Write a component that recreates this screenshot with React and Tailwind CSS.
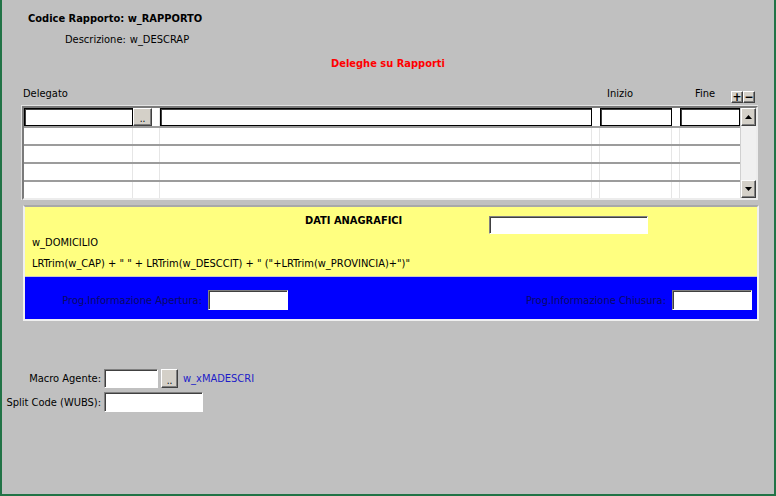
import React from "react";

const sunken =
  "bg-white border border-t-[#808080] border-l-[#808080] border-r-white border-b-white shadow-[inset_1px_1px_0_#404040]";
const raised =
  "bg-[#d4d0c8] border border-t-white border-l-white border-r-[#404040] border-b-[#404040] shadow-[inset_-1px_-1px_0_#808080]";
const gridInput = "bg-white border border-black shadow-[inset_1px_1px_0_#404040]";

const cellW = ["w-[109px]", "w-[27px]", "w-[432px]", "w-[8px]", "w-[72px]", "w-[8px]", "w-[60px]"];

const DataRow = ({ last }) => (
  <div className={`flex ${last ? "h-[16px]" : "h-[18px] border-b-2 border-[#9c9c9c]"}`}>
    {cellW.map((w, i) => (
      <div key={i} className={`${w} h-full ${i < 6 ? "border-r border-[#e6e6e6]" : ""}`} />
    ))}
  </div>
);

const Arrow = ({ down }) => (
  <svg width="7" height="4" viewBox="0 0 7 4">
    <polygon points={down ? "0,0 7,0 3.5,4" : "0,4 7,4 3.5,0"} fill="#000" />
  </svg>
);

const DotsButton = ({ className }) => (
  <div className={`${raised} ${className} flex items-end justify-center pb-[1px] text-[10px] leading-[10px]`}>
    ..
  </div>
);

export default function App() {
  return (
    <div className="w-[776px] h-[496px] bg-[#c0c0c0] border-l-2 border-r-2 border-b-2 border-[#217346] overflow-hidden font-['DejaVu_Sans_Condensed','Liberation_Sans',Arial,sans-serif] text-[11px] leading-[14px] text-black">
      <div className="mt-[11px] pt-[1px] pl-[26px] font-bold">Codice Rapporto: w_RAPPORTO</div>
      <div className="mt-[6px] pt-[1px] pl-[63px] flex">
        <span>Descrizione:</span>
        <span className="ml-[4px]">w_DESCRAP</span>
      </div>
      <div className="mt-[9px] pt-[1px] text-center font-bold text-[#ff0000]">Deleghe su Rapporti</div>

      {/* intestazione griglia */}
      <div className="mt-[15px] h-[19px] pl-[21px] flex items-start">
        <span className="w-[584px] pt-[1px]">Delegato</span>
        <span className="w-[88px] pt-[1px]">Inizio</span>
        <span className="w-[36px] pt-[1px]">Fine</span>
        <div className={`${raised} mt-[5px] w-[12px] h-[12px] flex items-center justify-center font-bold text-[12px] leading-[10px]`}>
          +
        </div>
        <div className={`${raised} mt-[5px] w-[12px] h-[12px] flex items-center justify-center font-bold text-[12px] leading-[10px]`}>
          −
        </div>
      </div>

      {/* griglia deleghe */}
      <div className="ml-[19px] w-[737px] border-t border-l border-[#e4e4e4]">
        <div className="flex bg-white border-2 border-t-[#7a7a7a] border-l-[#7a7a7a] border-r-[#ececec] border-b-[#ececec]">
          <div className="w-[716px]">
            <div className="flex h-[20px] border-b-2 border-[#9c9c9c]">
              <div className={`${gridInput} w-[109px] h-[18px]`} />
              <DotsButton className="w-[19px] h-[18px]" />
              <div className="w-[8px] h-full border-r border-[#e6e6e6]" />
              <div className={`${gridInput} w-[432px] h-[18px]`} />
              <div className="w-[8px] h-full" />
              <div className={`${gridInput} w-[72px] h-[18px]`} />
              <div className="w-[8px] h-full" />
              <div className={`${gridInput} w-[60px] h-[18px]`} />
            </div>
            <DataRow />
            <DataRow />
            <DataRow />
            <DataRow last />
          </div>
          <div className="w-[16px] flex flex-col border-l border-[#d0d0d0]">
            <div className={`${raised} h-[18px] flex items-center justify-center`}>
              <Arrow />
            </div>
            <div className="flex-1 bg-[#f0f0f0]" />
            <div className={`${raised} h-[18px] flex items-center justify-center`}>
              <Arrow down />
            </div>
          </div>
        </div>
      </div>

      {/* dati anagrafici */}
      <div className="mt-[5px] ml-[21px] w-[736px] border-2 border-t-[#a8a8a8] border-l-[#f0f0f0] border-r-[#f0f0f0] border-b-[#f0f0f0]">
        <div className="h-[70px] bg-[#ffff80] border-b border-[#c8c8c8]">
          <div className="flex pl-[280px] pt-[6px]">
            <span className="w-[184px] pt-[1px] font-bold">DATI ANAGRAFICI</span>
            <div className={`${sunken} mt-[3px] w-[159px] h-[18px]`} />
          </div>
          <div className="mt-[1px] pt-[1px] pl-[7px]">w_DOMICILIO</div>
          <div className="mt-[6px] pt-[1px] pl-[7px]">
            LRTrim(w_CAP) + " " + LRTrim(w_DESCCIT) + " ("+LRTrim(w_PROVINCIA)+")"
          </div>
        </div>
        <div className="h-[42px] bg-[#0000ff] pt-[13px] flex items-start text-[#0a0a66]">
          <span className="w-[177px] h-[20px] pt-[1px] flex items-center justify-end">Prog.Informazione Apertura:</span>
          <div className={`${sunken} ml-[6px] w-[80px] h-[20px]`} />
          <span className="w-[378px] h-[20px] pt-[1px] flex items-center justify-end">Prog.Informazione Chiusura:</span>
          <div className={`${sunken} ml-[6px] w-[80px] h-[20px]`} />
        </div>
      </div>

      {/* campi in basso */}
      <div className="mt-[48px] flex items-center h-[19px]">
        <span className="w-[99px] pt-[1px] text-right">Macro Agente:</span>
        <div className={`${sunken} ml-[3px] w-[54px] h-[19px]`} />
        <DotsButton className="ml-[3px] w-[17px] h-[19px]" />
        <span className="ml-[5px] pt-[1px] text-[#1c1cc8]">w_xMADESCRI</span>
      </div>
      <div className="mt-[4px] flex items-center h-[20px]">
        <span className="w-[99px] pt-[1px] text-right">Split Code (WUBS):</span>
        <div className={`${sunken} ml-[3px] w-[99px] h-[20px]`} />
      </div>
    </div>
  );
}
